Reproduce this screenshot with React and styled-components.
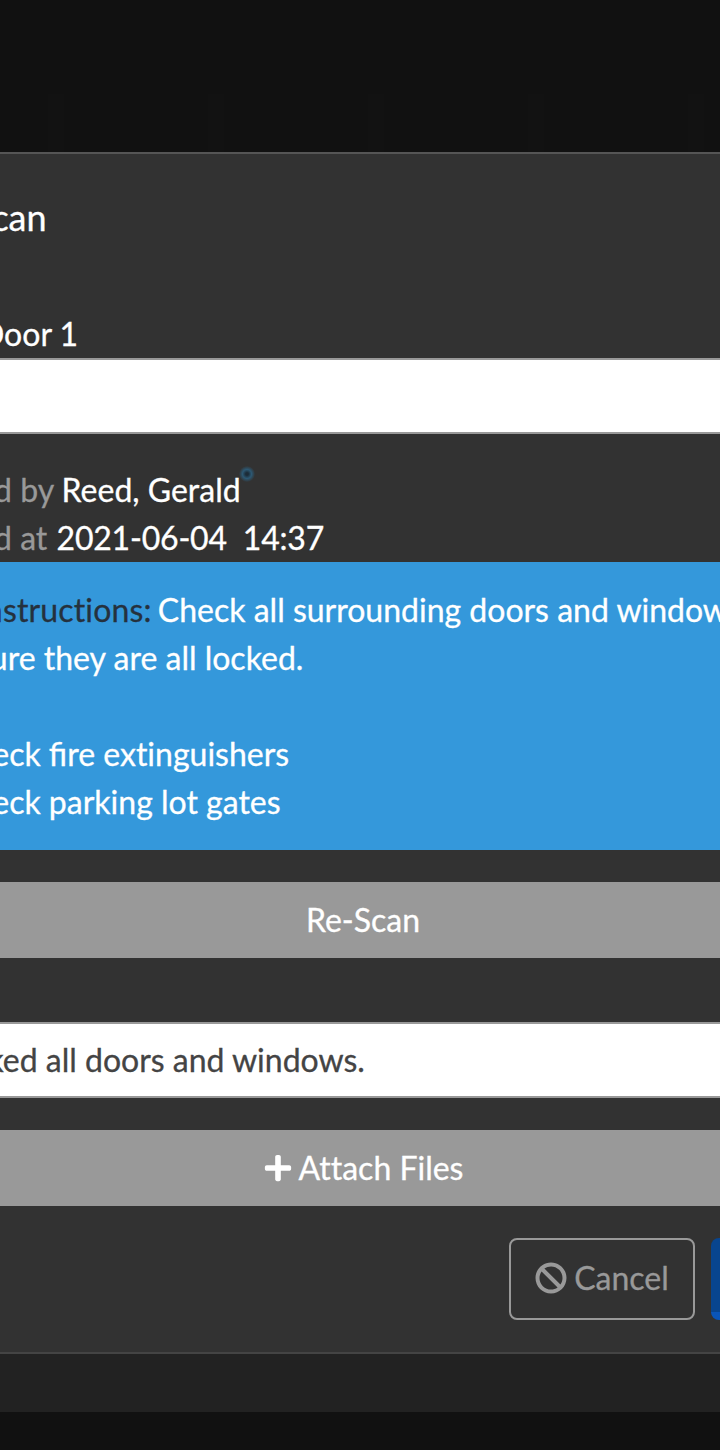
import React from "react";
import styled, { createGlobalStyle } from "styled-components";
import { FaBan, FaPlus } from "react-icons/fa";

const Global = createGlobalStyle`
  html, body { margin: 0; padding: 0; height: 1450px; overflow: hidden; background: #111; }
  * { box-sizing: border-box; }
  body {
    font-family: Lato, "Open Sans", sans-serif;
    font-size: 32px;
    line-height: 48px;
    color: #fff;
    font-variant-ligatures: none;
    -webkit-text-stroke: 0.3px;
  }
`;

const Page = styled.div`
  width: 720px;
  height: 1450px;
  display: flex;
  flex-direction: column;
  background: #111;
`;

const Backdrop = styled.div`
  height: 152px;
  display: flex;
  flex-direction: column;
  justify-content: flex-end;
`;

const Stripes = styled.div`
  height: 58px;
  background: repeating-linear-gradient(90deg, #111 0 48px, #121212 48px 64px, #111 64px 160px);
`;

const Modal = styled.section`
  width: 1286px;
  margin-left: -280px;
  height: 1202px;
  background: #323232;
  border-top: 2px solid #555;
  border-bottom: 2px solid #444;
  padding: 0 30px;
  display: flex;
  flex-direction: column;
  flex-shrink: 0;
`;

const Title = styled.h2`
  margin: 34px 0 0;
  height: 58px;
  font-size: 36px;
  line-height: 58px;
  font-weight: 400;
  padding-left: 222px;
  white-space: nowrap;
`;

const FieldLabel = styled.div`
  margin-top: 64px;
  height: 48px;
  padding-left: 230px;
  white-space: nowrap;
`;

const TextField = styled.div`
  height: 76px;
  margin-top: ${(p) => p.$top || 0}px;
  background: #fff;
  border-top: 2px solid #999;
  border-bottom: 2px solid #999;
  color: #444;
  line-height: 72px;
  padding-left: 166px;
  white-space: nowrap;
`;

const Meta = styled.div`
  margin-top: 32px;
  padding-left: 143px;
  color: #999;
  white-space: nowrap;
`;

const MetaRow = styled.div`
  height: 48px;
`;

const MetaValue = styled.span`
  position: relative;
  color: #fff;
  margin-left: ${(p) => p.$shift || 0}px;
  letter-spacing: ${(p) => p.$tracking || 0}px;
`;

const Presence = styled.i`
  position: absolute;
  right: -14px;
  top: -4px;
  width: 16px;
  height: 16px;
  border-radius: 50%;
  background: radial-gradient(circle, #1c2c38 0 12%, #2c5873 40%, rgba(44, 88, 115, 0) 72%);
`;

const Notice = styled.div`
  height: 288px;
  background: #3498db;
  padding: 24px 0 24px 203px;
  white-space: nowrap;
`;

const NoticeLine = styled.div`
  height: 48px;
  margin-left: ${(p) => p.$indent || 0}px;
`;

const NoticeLabel = styled.span`
  color: #25313d;
  letter-spacing: 0.15px;
  margin-right: -2px;
`;

const Ligatured = styled.span`
  font-variant-ligatures: common-ligatures;
`;

const WideButton = styled.div`
  height: 76px;
  margin-top: ${(p) => p.$top}px;
  background: #999;
  color: #fff;
  display: flex;
  align-items: center;
  justify-content: center;
  gap: 6px;
`;

const Footer = styled.div`
  margin-top: 32px;
  height: 82px;
  display: flex;
  justify-content: flex-end;
  gap: 16px;
`;

const GhostButton = styled.div`
  width: 186px;
  height: 82px;
  border: 2px solid #999;
  border-radius: 8px;
  color: #999;
  padding-bottom: 2px;
  display: flex;
  align-items: center;
  justify-content: center;
  gap: 7px;
`;

const PrimaryButton = styled.div`
  width: 265px;
  height: 82px;
  border-radius: 8px;
  background: #08458f;
  border-bottom: 8px solid #0a55b8;
  color: #fff;
  display: flex;
  align-items: center;
  justify-content: center;
`;

const Shade = styled.div`
  height: 58px;
  background: #222;
  flex-shrink: 0;
`;

export default function App() {
  return (
    <Page>
      <Global />
      <Backdrop>
        <Stripes />
      </Backdrop>
      <Modal>
        <Title>Scan</Title>
        <FieldLabel>Door 1</FieldLabel>
        <TextField />
        <Meta>
          <MetaRow>
            Scanned by{" "}
            <MetaValue>
              Reed, Gerald
              <Presence />
            </MetaValue>
          </MetaRow>
          <MetaRow>
            Scanned at <MetaValue $shift={1} $tracking={-0.2}>2021-06-04&nbsp;&nbsp;14:37</MetaValue>
          </MetaRow>
        </Meta>
        <Notice>
          <NoticeLine $indent={23}>
            <NoticeLabel>Instructions:</NoticeLabel> Check all surrounding doors and windows to make
          </NoticeLine>
          <NoticeLine $indent={23}>sure they are all locked.</NoticeLine>
          <NoticeLine />
          <NoticeLine>Check <Ligatured>fire</Ligatured> extinguishers</NoticeLine>
          <NoticeLine>Check parking lot gates</NoticeLine>
        </Notice>
        <WideButton $top={32}>Re-Scan</WideButton>
        <TextField $top={64}>Checked all doors and windows.</TextField>
        <WideButton $top={32}>
          <FaPlus size={30} />
          Attach Files
        </WideButton>
        <Footer>
          <GhostButton>
            <FaBan size={32} />
            Cancel
          </GhostButton>
          <PrimaryButton>Save</PrimaryButton>
        </Footer>
      </Modal>
      <Shade />
    </Page>
  );
}
